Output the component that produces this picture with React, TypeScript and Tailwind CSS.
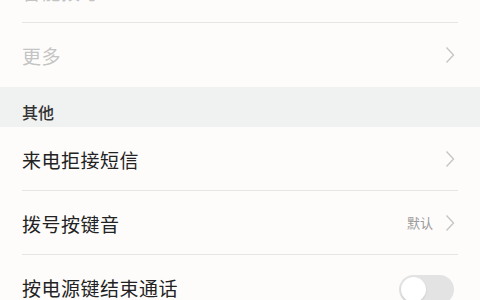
import React from 'react';

const font = { fontFamily: '"Noto Sans CJK SC", "Noto Sans", sans-serif' };

function Chevron() {
  return (
    <svg width="10" height="18" viewBox="0 0 10 18" className="shrink-0">
      <path d="M1.5 1.5 L8.5 9 L1.5 16.5" fill="none" stroke="#c6c6c6" strokeWidth="1.4" />
    </svg>
  );
}

function Row({
  label,
  muted,
  value,
  last,
  right,
}: {
  label: string;
  muted?: boolean;
  value?: string;
  last?: boolean;
  right?: React.ReactNode;
}) {
  return (
    <div className="px-[22px]">
      <div className={`flex h-[64px] items-center justify-between ${last ? '' : 'border-b border-[#e6e6e6]'}`}>
        <span className={`pt-[3px] text-[19px] tracking-[0.5px] ${muted ? 'text-[#c4c4c4]' : 'text-[#222]'}`}>{label}</span>
        {right ?? (
          <div className="flex items-center gap-[12px] pr-[3px]">
            {value && <span className="text-[13px] text-[#9a9a9a]">{value}</span>}
            <Chevron />
          </div>
        )}
      </div>
    </div>
  );
}

function Toggle() {
  return (
    <div className="mr-[4px] mt-[4px] flex h-[29px] w-[55px] items-center rounded-full bg-[#e3e3e3] px-[2px]">
      <div className="h-[25px] w-[25px] rounded-full bg-white shadow-[0_1px_2px_rgba(0,0,0,0.12)]" />
    </div>
  );
}

export default function App() {
  return (
    <div className="h-[300px] w-[480px] overflow-hidden bg-[#fdfcfb]" style={font}>
      <div className="mt-[-41px]">
        <Row label="智能拨号" muted />
        <Row label="更多" muted last />
        <div className="flex h-[40px] items-center bg-[#f0f1f1] px-[22px] pt-[10px]">
          <span className="text-[16px] font-medium text-[#333]">其他</span>
        </div>
        <Row label="来电拒接短信" />
        <Row label="拨号按键音" value="默认" />
        <Row label="按电源键结束通话" last right={<Toggle />} />
      </div>
    </div>
  );
}
